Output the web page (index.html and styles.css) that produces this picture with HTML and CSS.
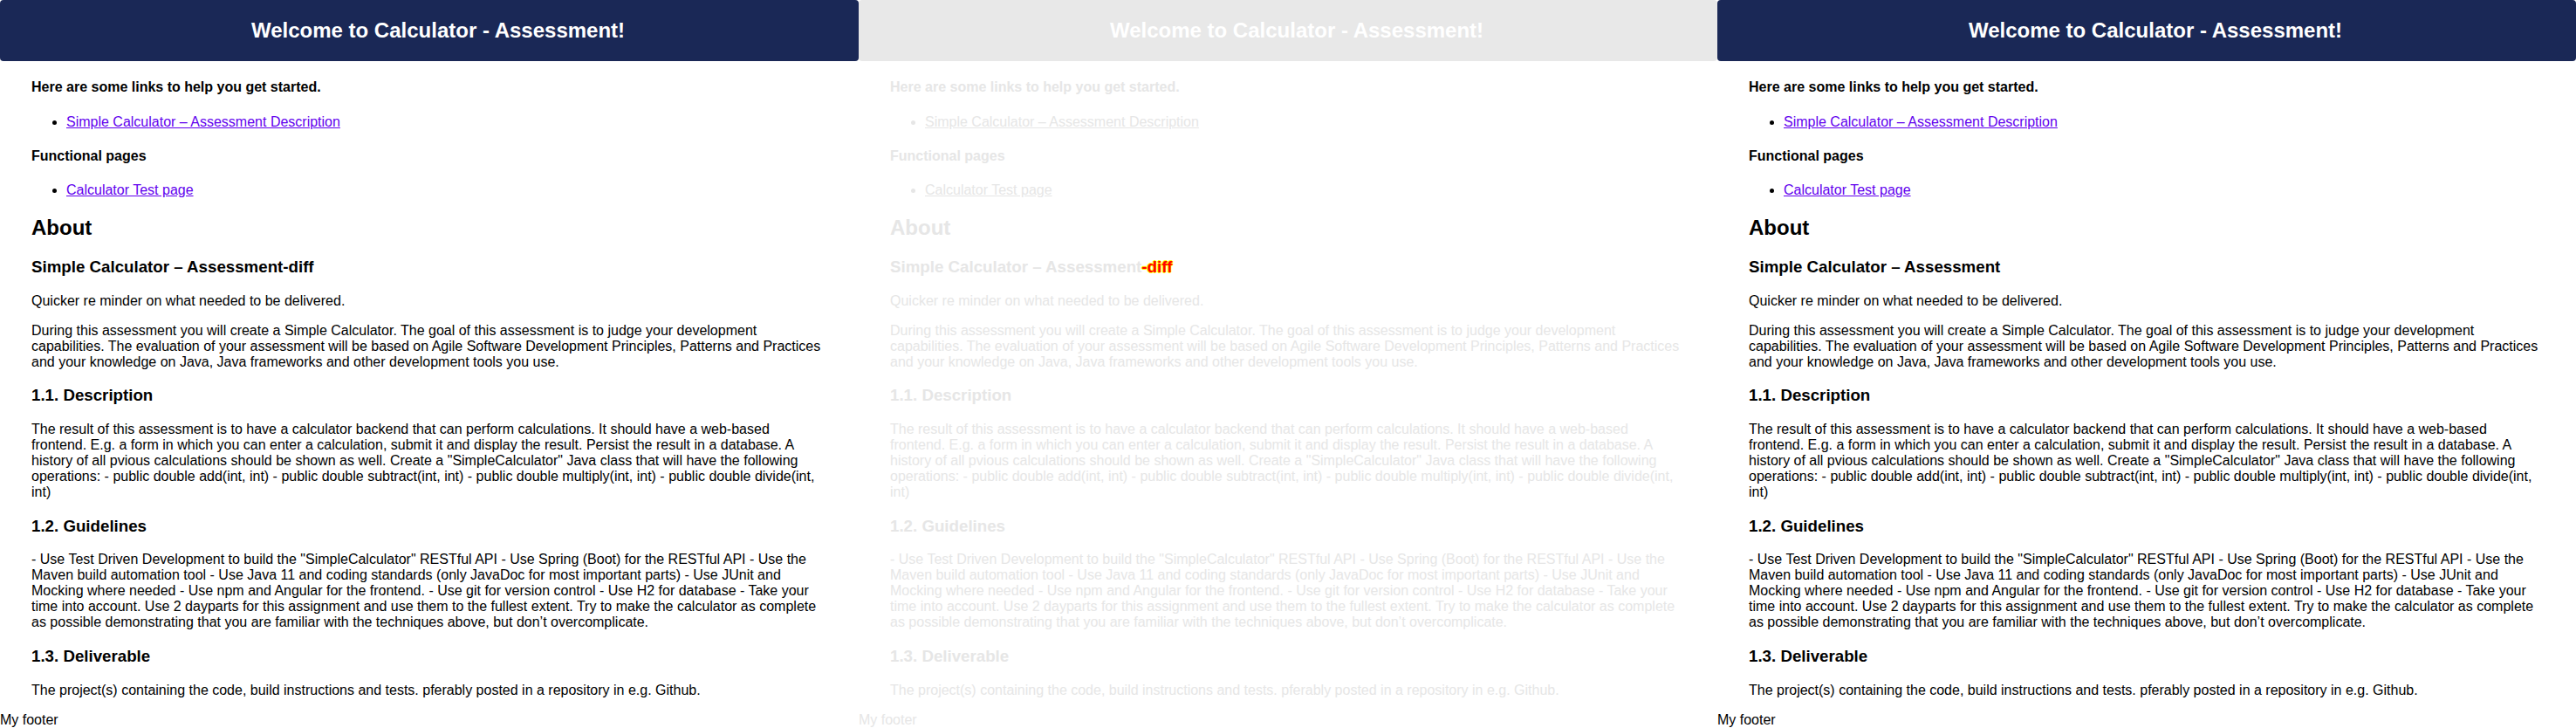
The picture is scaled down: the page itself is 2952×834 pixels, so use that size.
FILE: index.html
```html
<!DOCTYPE html>
<html>
<head>
<meta charset="utf-8">
<title>Calculator - Assessment</title>
<link rel="stylesheet" href="styles.css">
</head>
<body>
<div class="strip">
  <section class="page">
    <header class="topbar"><h1 class="title">Welcome to Calculator - Assessment!</h1></header>
    <main class="content">
      <h4>Here are some links to help you get started.</h4>
      <ul><li><a href="#">Simple Calculator – Assessment Description</a></li></ul>
      <h4>Functional pages</h4>
      <ul><li><a href="#">Calculator Test page</a></li></ul>
      <h2>About</h2>
      <h3>Simple Calculator – Assessment-diff</h3>
      <p>Quicker re minder on what needed to be delivered.</p>
      <p>During this assessment you will create a Simple Calculator. The goal of this assessment is to judge your development capabilities. The evaluation of your assessment will be based on Agile Software Development Principles, Patterns and Practices and your knowledge on Java, Java frameworks and other development tools you use.</p>
      <h3>1.1. Description</h3>
      <p>The result of this assessment is to have a calculator backend that can perform calculations. It should have a web-based frontend. E.g. a form in which you can enter a calculation, submit it and display the result. Persist the result in a database. A history of all pvious calculations should be shown as well. Create a "SimpleCalculator" Java class that will have the following operations: - public double add(int, int) - public double subtract(int, int) - public double multiply(int, int) - public double divide(int, int)</p>
      <h3>1.2. Guidelines</h3>
      <p>- Use Test Driven Development to build the "SimpleCalculator" RESTful API - Use Spring (Boot) for the RESTful API - Use the Maven build automation tool - Use Java 11 and coding standards (only JavaDoc for most important parts) - Use JUnit and Mocking where needed - Use npm and Angular for the frontend. - Use git for version control - Use H2 for database - Take your time into account. Use 2 dayparts for this assignment and use them to the fullest extent. Try to make the calculator as complete as possible demonstrating that you are familiar with the techniques above, but don’t overcomplicate.</p>
      <h3>1.3. Deliverable</h3>
      <p>The project(s) containing the code, build instructions and tests. pferably posted in a repository in e.g. Github.</p>
    </main>
    <footer class="foot">My footer</footer>
  </section>

  <section class="page faded">
    <header class="topbar"><h1 class="title">Welcome to Calculator - Assessment!</h1></header>
    <main class="content">
      <h4>Here are some links to help you get started.</h4>
      <ul><li><a href="#">Simple Calculator – Assessment Description</a></li></ul>
      <h4>Functional pages</h4>
      <ul><li><a href="#">Calculator Test page</a></li></ul>
      <h2>About</h2>
      <h3>Simple Calculator – Assessment<span class="diff">-diff</span></h3>
      <p>Quicker re minder on what needed to be delivered.</p>
      <p>During this assessment you will create a Simple Calculator. The goal of this assessment is to judge your development capabilities. The evaluation of your assessment will be based on Agile Software Development Principles, Patterns and Practices and your knowledge on Java, Java frameworks and other development tools you use.</p>
      <h3>1.1. Description</h3>
      <p>The result of this assessment is to have a calculator backend that can perform calculations. It should have a web-based frontend. E.g. a form in which you can enter a calculation, submit it and display the result. Persist the result in a database. A history of all pvious calculations should be shown as well. Create a "SimpleCalculator" Java class that will have the following operations: - public double add(int, int) - public double subtract(int, int) - public double multiply(int, int) - public double divide(int, int)</p>
      <h3>1.2. Guidelines</h3>
      <p>- Use Test Driven Development to build the "SimpleCalculator" RESTful API - Use Spring (Boot) for the RESTful API - Use the Maven build automation tool - Use Java 11 and coding standards (only JavaDoc for most important parts) - Use JUnit and Mocking where needed - Use npm and Angular for the frontend. - Use git for version control - Use H2 for database - Take your time into account. Use 2 dayparts for this assignment and use them to the fullest extent. Try to make the calculator as complete as possible demonstrating that you are familiar with the techniques above, but don’t overcomplicate.</p>
      <h3>1.3. Deliverable</h3>
      <p>The project(s) containing the code, build instructions and tests. pferably posted in a repository in e.g. Github.</p>
    </main>
    <footer class="foot">My footer</footer>
  </section>

  <section class="page">
    <header class="topbar"><h1 class="title">Welcome to Calculator - Assessment!</h1></header>
    <main class="content">
      <h4>Here are some links to help you get started.</h4>
      <ul><li><a href="#">Simple Calculator – Assessment Description</a></li></ul>
      <h4>Functional pages</h4>
      <ul><li><a href="#">Calculator Test page</a></li></ul>
      <h2>About</h2>
      <h3>Simple Calculator – Assessment</h3>
      <p>Quicker re minder on what needed to be delivered.</p>
      <p>During this assessment you will create a Simple Calculator. The goal of this assessment is to judge your development capabilities. The evaluation of your assessment will be based on Agile Software Development Principles, Patterns and Practices and your knowledge on Java, Java frameworks and other development tools you use.</p>
      <h3>1.1. Description</h3>
      <p>The result of this assessment is to have a calculator backend that can perform calculations. It should have a web-based frontend. E.g. a form in which you can enter a calculation, submit it and display the result. Persist the result in a database. A history of all pvious calculations should be shown as well. Create a "SimpleCalculator" Java class that will have the following operations: - public double add(int, int) - public double subtract(int, int) - public double multiply(int, int) - public double divide(int, int)</p>
      <h3>1.2. Guidelines</h3>
      <p>- Use Test Driven Development to build the "SimpleCalculator" RESTful API - Use Spring (Boot) for the RESTful API - Use the Maven build automation tool - Use Java 11 and coding standards (only JavaDoc for most important parts) - Use JUnit and Mocking where needed - Use npm and Angular for the frontend. - Use git for version control - Use H2 for database - Take your time into account. Use 2 dayparts for this assignment and use them to the fullest extent. Try to make the calculator as complete as possible demonstrating that you are familiar with the techniques above, but don’t overcomplicate.</p>
      <h3>1.3. Deliverable</h3>
      <p>The project(s) containing the code, build instructions and tests. pferably posted in a repository in e.g. Github.</p>
    </main>
    <footer class="foot">My footer</footer>
  </section>
</div>
</body>
</html>
```
FILE: styles.css
```css
html, body {
  margin: 0;
  padding: 0;
  background: #ffffff;
}

body {
  font-family: "Liberation Sans", Arial, sans-serif;
  font-size: 16px;
  color: #000000;
}

.strip {
  display: flex;
  width: 2952px;
  height: 834px;
  overflow: hidden;
}

.page {
  width: 984px;
  height: 834px;
  flex: 0 0 984px;
  overflow: hidden;
  display: flex;
  flex-direction: column;
}

.topbar {
  flex: 0 0 70px;
  height: 70px;
  background: #1a2856;
  border-radius: 4px;
  display: flex;
  align-items: center;
  justify-content: center;
  padding-left: 20px;
}

.title {
  margin: 0;
  font-size: 24px;
  font-weight: bold;
  color: #ffffff;
}

.content {
  padding: 0 36px;
  display: flow-root;
}

.content a {
  color: #6200ee;
}

.foot {
  line-height: normal;
}

/* middle diff panel */
.faded {
  color: #e6e6e6;
}

.faded .topbar {
  background: #e8e8e8;
}

.faded .content a {
  color: #e6e6e6;
}

.diff {
  color: #ff0000;
  text-shadow: 1px 0 0 #ffff00, -1px 0 0 #ffff00, 0 1px 0 #ffff00, 0 -1px 0 #ffff00;
}
```
